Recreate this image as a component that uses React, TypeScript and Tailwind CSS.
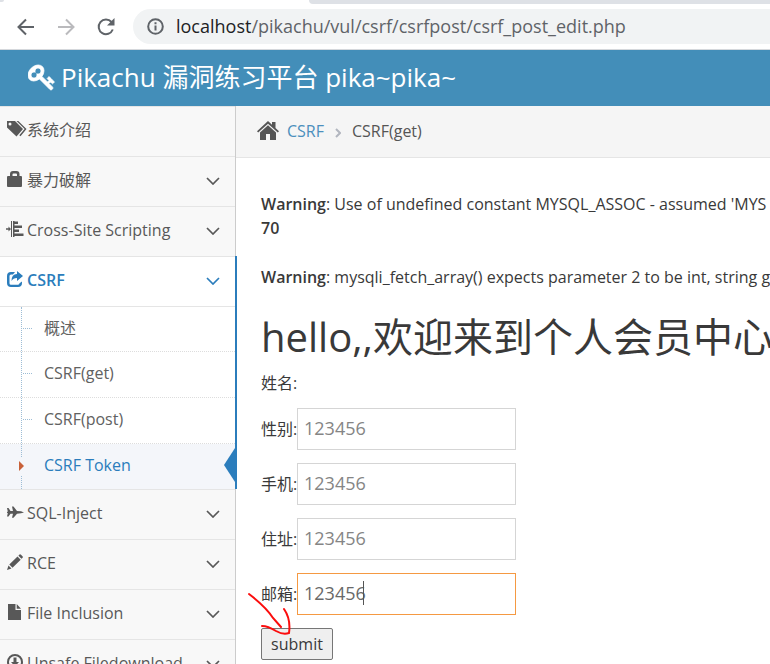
import type { ReactNode } from "react";

function Svg({ children, w = 16, h = 16 }: { children: ReactNode; w?: number; h?: number }) {
  return (
    <svg width={w} height={h} viewBox={`0 0 ${w} ${h}`} fill="currentColor" className="shrink-0" aria-hidden="true">
      {children}
    </svg>
  );
}

const KeyIcon = () => (
  <svg width="28" height="28" viewBox="0 0 1792 1792" fill="currentColor" stroke="currentColor" strokeWidth="50" className="shrink-0" aria-hidden="true">
    <path d="M832 512q0-80-56-136t-136-56-136 56-56 136q0 42 19 83-41-19-83-19-80 0-136 56t-56 136 56 136 136 56 136-56 56-136q0-42-19-83 41 19 83 19 80 0 136-56t56-136zm851 704q0 17-49 66t-66 49q-9 0-28.5-16t-36.5-33-38.5-40-24.5-26l-96 96 220 220q28 28 28 68 0 42-39 81t-81 39q-40 0-68-28l-671-671q-176 131-365 131-163 0-265.5-102.5t-102.5-265.5q0-160 95-313t248-248 313-95q163 0 265.5 102.5t102.5 265.5q0 189-131 365l355 355 96-96q-3-3-26-24.5t-40-38.5-33-36.5-16-28.5q0-17 49-66t66-49q13 0 23 10 6 6 46 44.5t82 79.5 86.5 86 73 78 28.5 41z" />
  </svg>
);

const TagsIcon = () => (
  <Svg w={20}>
    <path fillRule="evenodd" d="M0 0h8l8 8-6.500 7.500L0 6.500zM3 1.500a1.500 1.500 0 1 0 0 3 1.500 1.500 0 0 0 0-3z" />
    <path d="M9.500 0h1.800l8.200 8-6 7.300-1.200-1 5.300-6.300z" />
  </Svg>
);
const LockIcon = () => (
  <Svg>
    <path fillRule="evenodd" d="M3 5V3q0-3 3-3h3.500q3 0 3 3v2H14q1 0 1 1v9q0 1-1 1H1q-1 0-1-1V6q0-1 1-1zm2.500 0H10V3.500q0-1-1-1H6.500q-1 0-1 1z" />
  </Svg>
);
const IndentIcon = () => (
  <svg width="18" height="16" viewBox="0 0 18 16" fill="currentColor" className="-ml-px shrink-0" aria-hidden="true">
    <path d="M0 7.300h2.500V5.500L5 8 2.500 10.500V8.700H0zM5 0h1v16H5zM7 0h1.500v16H7zM8.500.500H12V3H8.500zM8.500 4.500H16V7H8.500zM8.500 8.500H13V11H8.500zM8.500 12.500h9V15h-9z" />
  </svg>
);
const ShareIcon = () => (
  <Svg>
    <path d="M8 1H4Q0 1 0 5v7q0 4 4 4h7q4 0 4-4v-1.500l-2.500 1.800q0 1.400-1.500 1.400H4q-1.500 0-1.500-1.500V5Q2.500 3.500 4 3.500h2z" />
    <path d="M10 0l6 5-6 5V7Q6 7 4.500 10 4.500 3 10 3z" />
  </Svg>
);
const PlaneIcon = () => (
  <Svg w={17}>
    <path d="M0 4h1.500l2 3H6L5 2.500h1.500L10 7l4 .3L17 8.500l-3 .8-4 .5-3.500 4H5l1-4H3.500l-2 2.700H0l.8-3.200L0 8.800V8l.8-.5z" />
  </Svg>
);
const PencilIcon = () => (
  <Svg>
    <path d="M12.500.500q.7-.6 1.500.2l1.500 1.500q.8.800.1 1.500L14.500 4.800 11.400 1.700zM10.500 2.500l3.200 3.200-8.200 8.100-3.200-3.200zM1.500 11.500l3 3L0 16z" />
  </Svg>
);
const FileIcon = () => (
  <Svg>
    <path d="M1 0h7.500v6H14v10H1zM9.700 0L14 4.800H9.700z" />
  </Svg>
);
const DownloadIcon = () => (
  <Svg>
    <path fillRule="evenodd" d="M8 0a8 8 0 1 1 0 16A8 8 0 0 1 8 0zm0 2a6 6 0 1 0 0 12A6 6 0 0 0 8 2z" />
    <path d="M6.500 3.500h3V8H12l-4 4.500L4 8h2.500z" />
  </Svg>
);
const HomeIcon = () => (
  <Svg w={22} h={19}>
    <path d="M11 0l4 3.700V1h3.500v6L22 10.300l-1.200 1.300L11 2.700 1.200 11.600 0 10.300z" />
    <path d="M11 4.200l8 7.200V19h-6v-6H9v6H3v-7.600z" />
  </Svg>
);

const Chevron = () => (
  <svg width="14" height="8" viewBox="0 0 14 8" fill="none" stroke="currentColor" strokeWidth="1.700" className="mt-[2px] ml-auto shrink-0" aria-hidden="true">
    <path d="M1 1l6 6 6-6" />
  </svg>
);

function NavRow({ icon, label, open = false, chevron = true }: { icon: ReactNode; label: string; open?: boolean; chevron?: boolean }) {
  return (
    <a
      href="#"
      className={
        "flex h-[50px] items-center border-t border-[#e5e5e5] pr-[15px] pl-[7px] pb-[3px] whitespace-nowrap " +
        (open ? "bg-white font-semibold text-[#2b7dbc]" : "bg-[#f8f8f8] text-[#585858]")
      }
    >
      <span className="flex w-5 shrink-0 items-center pb-[2px]">{icon}</span>
      <span>{label}</span>
      {chevron && <Chevron />}
    </a>
  );
}

const subItems = ["概述", "CSRF(get)", "CSRF(post)", "CSRF Token"];

function SubMenu() {
  return (
    <ul className="relative border-t border-[#e5e5e5] bg-white">
      {subItems.map((label, i) => {
        const active = i === subItems.length - 1;
        return (
          <li key={label} className={"relative " + (i > 0 ? "border-t border-dotted border-[#dddddd]" : "")}>
            <a
              href="#"
              className={
                "flex items-center pl-11 pb-[3px] " +
                (i > 0 ? "h-[45px] " : "h-11 ") +
                (active ? "bg-[#f4f6fa] text-[#2b7dbc]" : "text-[#616161]")
              }
            >
              {label}
            </a>
            {!active && <span className="absolute top-[21px] left-[23px] w-[9px] border-t border-dotted border-[#9dbdd6]" />}
          </li>
        );
      })}
      <li aria-hidden="true" className="absolute top-0 bottom-0 left-[21px] border-l border-dotted border-[#9dbdd6]" />
      <li aria-hidden="true" className="absolute bottom-[14px] left-[18px] bg-[#f4f6fa] py-1">
        <svg width="7" height="10" viewBox="0 0 7 10">
          <path d="M1 0l5 5-5 5z" fill="#c86139" />
        </svg>
      </li>
      <li aria-hidden="true" className="absolute right-0 bottom-[7px]">
        <svg width="11" height="34" viewBox="0 0 11 34">
          <path d="M11 0v34L0 17z" fill="#2b7dbc" />
        </svg>
      </li>
    </ul>
  );
}

function Field({ id, label, focused = false }: { id: string; label: string; focused?: boolean }) {
  return (
    <div className="relative mb-[13px] flex items-center">
      <label htmlFor={id} className="w-9 shrink-0 whitespace-nowrap">
        {label}:
      </label>
      <input
        id={id}
        type="text"
        defaultValue="123456"
        className={
          "h-[42px] w-[219px] border bg-white px-[6px] pb-[2px] text-lg outline-none " +
          (focused ? "border-[#f59942] text-[#696969]" : "border-[#d5d5d5] text-[#858585]")
        }
      />
      {focused && <span className="absolute top-2 left-[102px] h-6 w-px bg-[#555555]" />}
    </div>
  );
}

export default function App() {
  return (
    <div className="flex h-screen flex-col overflow-hidden bg-white font-['Open_Sans','Noto_Sans_CJK_SC',sans-serif] text-base text-[#393939]">
      <div className="shrink-0 border-b border-[#d5d8dc] bg-white">
        <div className="flex h-1 justify-between bg-white">
          <div className="h-[2px] w-1 rounded-br bg-[#dee1e6]" />
          <div className="ml-[305px] h-1 flex-1 rounded-bl-lg bg-[#dee1e6]" />
        </div>
        <div className="flex h-[45px] items-center pl-[17px]">
          <button type="button" aria-label="Back" className="mr-[22px] text-[#5f6368]">
            <svg width="18" height="18" viewBox="0 0 18 18" fill="none" stroke="currentColor" strokeWidth="2">
              <path d="M17 9H2M9 1.500L1.500 9 9 16.500" />
            </svg>
          </button>
          <button type="button" aria-label="Forward" className="mr-[22px] text-[#bababd]">
            <svg width="18" height="18" viewBox="0 0 18 18" fill="none" stroke="currentColor" strokeWidth="2">
              <path d="M1 9h15M9 1.500L16.500 9 9 16.500" />
            </svg>
          </button>
          <button type="button" aria-label="Reload" className="mr-[18px] text-[#5f6368]">
            <svg width="18" height="18" viewBox="0 0 18 18" fill="none" stroke="currentColor" strokeWidth="2">
              <path d="M15.800 11.500A7.300 7.300 0 1 1 14.500 4" />
              <path d="M17.500 0v7.500H10z" fill="currentColor" stroke="none" />
            </svg>
          </button>
          <div className="flex h-[35px] flex-1 items-center rounded-l-full bg-[#f1f3f4] pl-[14px]">
            <svg width="17" height="17" viewBox="0 0 17 17" fill="none" stroke="#5f6368" strokeWidth="2" className="mr-3 shrink-0" aria-hidden="true">
              <circle cx="8.500" cy="8.500" r="7.300" />
              <path d="M8.500 7.500v5M8.500 4.300v2" />
            </svg>
            <span className="pb-[2px] text-lg whitespace-nowrap text-[#5f6368]">
              <span className="text-[#202124]">localhost</span>/pikachu/vul/csrf/csrfpost/csrf_post_edit.php
            </span>
          </div>
        </div>
      </div>

      <header className="flex h-14 shrink-0 items-center bg-[#438eb9] pb-[2px] pl-7 text-white">
        <KeyIcon />
        <a href="#" className="ml-[5px] text-[26px] whitespace-nowrap">
          Pikachu 漏洞练习平台 pika~pika~
        </a>
      </header>

      <div className="flex min-h-0 flex-1">
        <nav className="w-[236px] shrink-0 border-r border-[#cccccc] bg-[#f2f2f2]">
          <NavRow icon={<TagsIcon />} label="系统介绍" chevron={false} />
          <NavRow icon={<LockIcon />} label="暴力破解" />
          <NavRow icon={<IndentIcon />} label="Cross-Site Scripting" />
          <div className="relative">
            <NavRow icon={<ShareIcon />} label="CSRF" open />
            <SubMenu />
            <span className="absolute inset-y-0 -right-[2px] w-[2px] bg-[#2b7dbc]" />
          </div>
          <NavRow icon={<PlaneIcon />} label="SQL-Inject" />
          <NavRow icon={<PencilIcon />} label="RCE" />
          <NavRow icon={<FileIcon />} label="File Inclusion" />
          <NavRow icon={<DownloadIcon />} label="Unsafe Filedownload" />
        </nav>

        <main className="min-w-0 flex-1 overflow-hidden">
          <div className="flex h-[52px] items-center border-b border-[#e5e5e5] bg-[#f5f5f5] pb-[2px] pl-[21px] text-[#555555]">
            <HomeIcon />
            <a href="#" className="ml-2 text-[#4c8fbd]">
              CSRF
            </a>
            <svg width="6" height="10" viewBox="0 0 6 10" fill="none" stroke="#b2b6bf" strokeWidth="2" className="mx-[11px] mt-1" aria-hidden="true">
              <path d="M1 1l4 4-4 4" />
            </svg>
            <span>CSRF(get)</span>
          </div>

          <div className="pt-[34px] pl-[25px]">
            <p className="whitespace-nowrap">
              <b className="font-semibold">Warning</b>: Use of undefined constant MYSQL_ASSOC - assumed 'MYS
            </p>
            <p className="mb-[25px]">
              <b className="font-semibold">70</b>
            </p>
            <p className="whitespace-nowrap">
              <b className="font-semibold">Warning</b>: mysqli_fetch_array() expects parameter 2 to be int, string g
            </p>
            <h1 className="mt-5 text-[40px] leading-[56px] whitespace-nowrap">hello,,欢迎来到个人会员中心</h1>
            <form className="pt-[6px]" onSubmit={(e) => e.preventDefault()}>
              <p className="mb-[13px]">姓名:</p>
              <Field id="sex" label="性别" />
              <Field id="phone" label="手机" />
              <Field id="address" label="住址" />
              <Field id="email" label="邮箱" focused />
              <div className="relative">
                <button type="submit" className="h-8 w-[72px] rounded-[2px] border border-[#767676] bg-[#efefef]">
                  submit
                </button>
                <svg width="48" height="44" viewBox="0 0 48 44" fill="none" stroke="#fb0d0d" strokeWidth="2" strokeLinecap="round" className="pointer-events-none absolute -top-[36px] -left-[13px]" aria-hidden="true">
                  <path d="M1 2Q18 15 25 26L33 35" />
                  <path d="M36 17Q43 27 41 41Q35 43 28 39Q20 34 14 34" />
                </svg>
              </div>
            </form>
          </div>
        </main>
      </div>
    </div>
  );
}
